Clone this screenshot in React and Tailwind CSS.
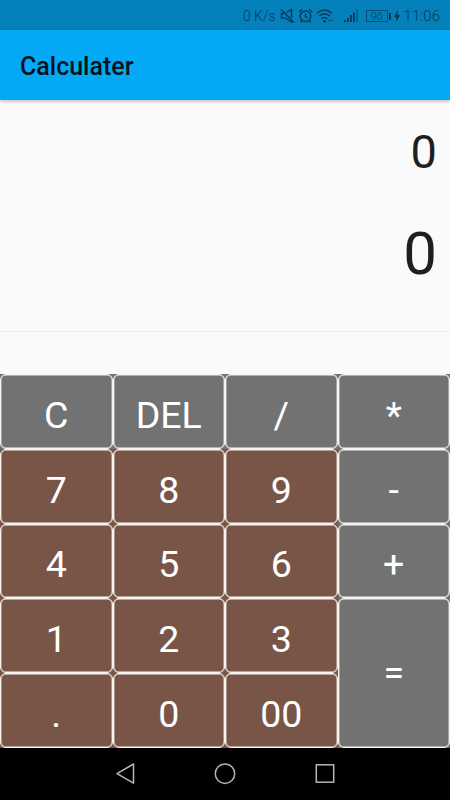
const keys = [
  { label: "C", tone: "gray" },
  { label: "DEL", tone: "gray" },
  { label: "/", tone: "gray" },
  { label: "*", tone: "gray" },
  { label: "7" },
  { label: "8" },
  { label: "9" },
  { label: "-", tone: "gray" },
  { label: "4" },
  { label: "5" },
  { label: "6" },
  { label: "+", tone: "gray" },
  { label: "1" },
  { label: "2" },
  { label: "3" },
  { label: "=", tone: "gray", tall: true },
  { label: "." },
  { label: "0" },
  { label: "00" },
];

const Key = ({ label, tone, tall }) => (
  <button className={`flex min-h-0 ${tone === "gray" ? "bg-[#727272]" : "bg-[#795548]"} ${tall ? "row-span-2" : ""}`}>
    <span
      className={`flex flex-1 self-stretch items-center justify-center rounded-[6px] border border-[#f7f3ef] text-[37.5px] leading-[44px] text-white shadow-[inset_0_0_0_0.4px_#f7f3ef] ${tall ? "pb-[3px]" : "pt-[7px]"}`}
    >
      {label}
    </span>
  </button>
);

const StatusBar = () => (
  <div className="flex h-[30px] items-center justify-end bg-[#0480ba] pr-[10px] pt-[2px] text-[#053a58]">
    <span className="mr-[4px] text-[14px] font-light leading-[28px]">0 K/s</span>
    {/* muted bell */}
    <svg className="mr-[3px]" width="15" height="16" viewBox="0 0 15 16" fill="none" stroke="currentColor" strokeWidth="1.4">
      <path d="M1 1.5l13 13M4.5 5.5H1.5v4.5H5l6.5 4V12M6.5 4.5l5-3v8" />
    </svg>
    {/* alarm */}
    <svg className="mr-[3px]" width="15" height="16" viewBox="0 0 15 16" fill="none" stroke="currentColor" strokeWidth="1.4">
      <circle cx="7.5" cy="8.3" r="5.3" />
      <path d="M7.5 5.3v3.3l2 1.2M1 4l3-2.7M14 4l-3-2.7M3.8 12.8l-1.3 1.5M11.2 12.8l1.3 1.5" />
    </svg>
    {/* wifi */}
    <svg className="mr-[10px]" width="18" height="16" viewBox="0 0 18 16" fill="none" stroke="currentColor" strokeWidth="1.5">
      <path d="M1 5.2q7.5-6.5 15 0M3.3 8q5.2-4.6 10.4 0M5.5 10.8q3-2.6 6 0" />
      <circle cx="8.5" cy="13.2" r="1.3" fill="currentColor" stroke="none" />
      <path d="M12 13l1.3-1.5 1.3 1.5zM14.8 12l1.1 1.4 1.1-1.4z" fill="currentColor" stroke="none" />
    </svg>
    {/* signal */}
    <svg className="mr-[7px]" width="15" height="14" viewBox="0 0 15 14" fill="currentColor">
      <path d="M0 11h1.8v2H0zM3 9h1.8v4H3zM6 6h1.8v7H6zM9 3.5h1.8V13H9z" />
      <path d="M12.2 0H14v13h-1.8z" opacity=".5" />
    </svg>
    {/* battery */}
    <span className="flex h-[12px] w-[22px] items-center justify-center border border-[#053a58]/70 text-[11px] font-light leading-none">96</span>
    <span className="ml-px mr-[3px] h-[7px] w-[2px] bg-current" />
    <svg className="mr-[4px]" width="6" height="12" viewBox="0 0 6 12" fill="currentColor">
      <path d="M4 0L0 7h2.4L2 12l4-7H3.6z" />
    </svg>
    <span className="text-[15px] font-light leading-[28px]">11:06</span>
  </div>
);

const NavBar = () => (
  <div className="flex h-[52px] items-center justify-center gap-[76px] bg-black text-[#b5b5b5]">
    <svg width="24" height="24" viewBox="0 0 24 24" fill="none" stroke="currentColor" strokeWidth="1.5" strokeLinejoin="round">
      <path d="M20.5 2v19.2L4 11.6z" />
    </svg>
    <svg width="24" height="24" viewBox="0 0 24 24" fill="none" stroke="currentColor" strokeWidth="1.5">
      <circle cx="12" cy="11.7" r="9.7" />
    </svg>
    <svg width="24" height="24" viewBox="0 0 24 24" fill="none" stroke="currentColor" strokeWidth="1.5">
      <rect x="3.3" y="2.8" width="17.4" height="17.4" />
    </svg>
  </div>
);

const App = () => {
  return (
    <div className="flex h-[800px] w-[450px] flex-col overflow-hidden bg-[#fafafa] font-['Roboto',sans-serif]">
      <StatusBar />
      <header className="relative flex h-[70px] items-center bg-[#03a9f4] px-5 pt-[3px] shadow-[0_1px_4px_rgba(0,0,0,0.3)]">
        <h1 className="text-[25px] font-medium leading-[30px] text-[#06131c]">Calculater</h1>
      </header>
      <main className="flex flex-1 flex-col">
        <div className="flex h-[232px] flex-col items-end border-b border-[#ececec] pr-[13px] text-[#1f1f1f]">
          <div className="mt-[24px] text-[47px] leading-[56px]">0</div>
          <div className="mt-[39px] text-[60px] leading-[70px]">0</div>
        </div>
        <div className="h-[42px]" />
        <div className="grid h-[374px] grid-cols-4 grid-rows-5">
          {keys.map((key) => (
            <Key key={key.label} {...key} />
          ))}
        </div>
      </main>
      <NavBar />
    </div>
  );
};

export default App;
